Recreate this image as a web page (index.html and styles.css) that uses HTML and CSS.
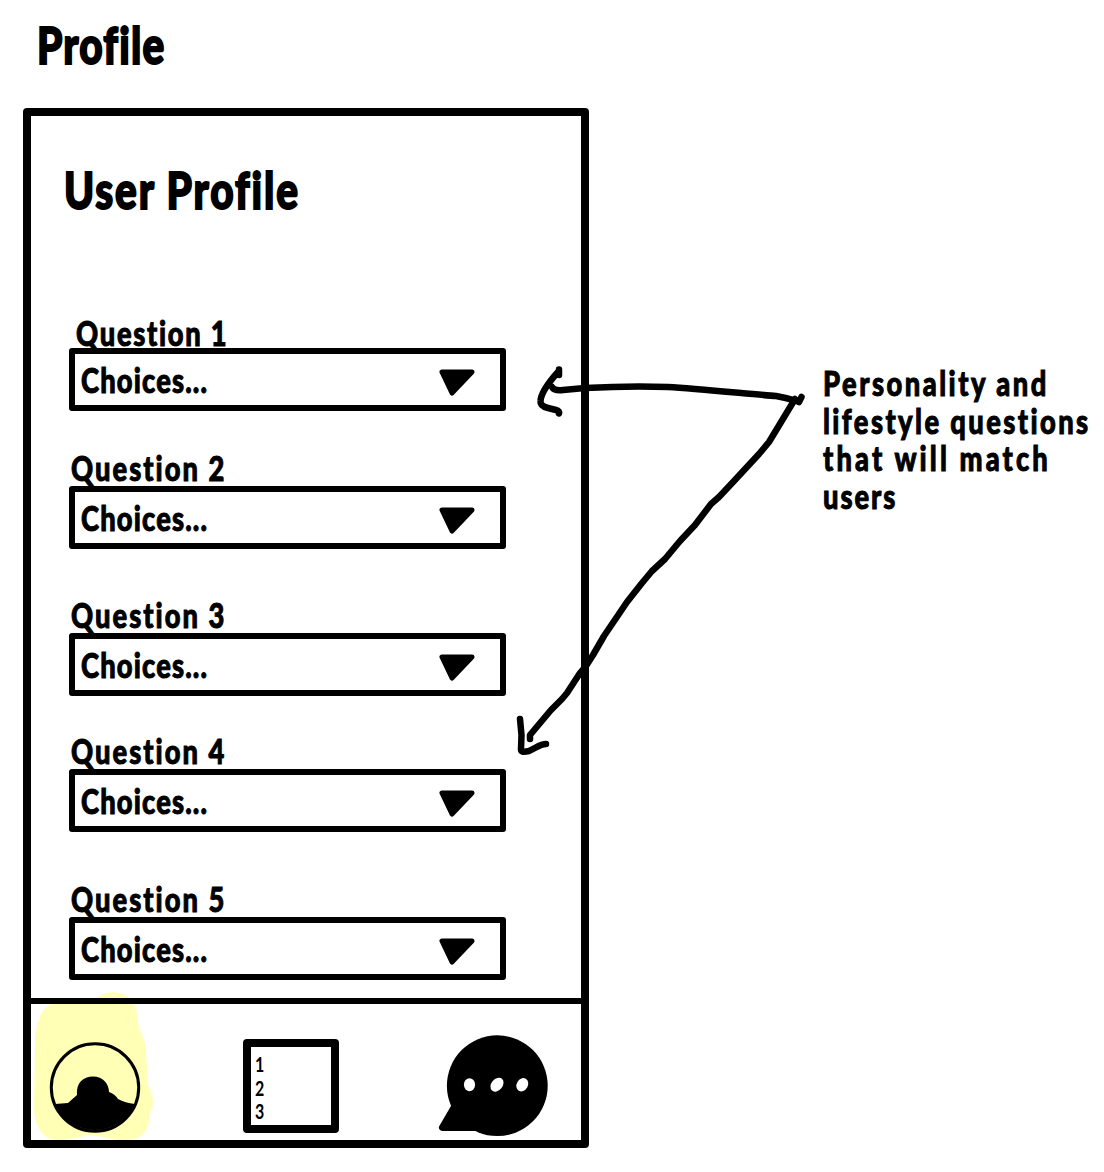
FILE: index.html
```html
<!DOCTYPE html>
<html lang="en">
<head>
<meta charset="utf-8">
<title>Profile</title>
<link rel="stylesheet" href="styles.css">
</head>
<body>
<main class="board">
  <h1 class="title"><span class="ink">Profile</span></h1>
  <div class="row">
    <section class="phone">
      <div class="screen">
        <h2 class="heading"><span class="ink">User Profile</span></h2>
        <form class="questions">
          <div class="field first"><label class="label"><span class="ink">Question 1</span></label><div class="select"><span class="ink">Choices...</span><svg class="caret" viewBox="0 0 36 27"><path d="M3 3H33L13 24Z"/></svg></div></div>
          <div class="field"><label class="label"><span class="ink">Question 2</span></label><div class="select"><span class="ink">Choices...</span><svg class="caret" viewBox="0 0 36 27"><path d="M3 3H33L13 24Z"/></svg></div></div>
          <div class="field"><label class="label"><span class="ink">Question 3</span></label><div class="select"><span class="ink">Choices...</span><svg class="caret" viewBox="0 0 36 27"><path d="M3 3H33L13 24Z"/></svg></div></div>
          <div class="field"><label class="label"><span class="ink">Question 4</span></label><div class="select"><span class="ink">Choices...</span><svg class="caret" viewBox="0 0 36 27"><path d="M3 3H33L13 24Z"/></svg></div></div>
          <div class="field"><label class="label"><span class="ink">Question 5</span></label><div class="select"><span class="ink">Choices...</span><svg class="caret" viewBox="0 0 36 27"><path d="M3 3H33L13 24Z"/></svg></div></div>
        </form>
      </div>
      <nav class="tabs">
        <div class="tab active">
          <svg class="marker" viewBox="33 990 122 152"><path d="M98 997C106 990 124 991 130 999C138 1006 137 1017 139 1029C147 1041 146 1055 147 1068L148 1085C154 1096 155 1106 149 1115C150 1130 143 1138 130 1140C116 1142 104 1136 88 1135C75 1139 58 1142 48 1138C39 1134 34 1120 34 1108L35 1040C36 1025 40 1011 48 1006C60 998 82 1003 98 997Z"/></svg>
          <svg class="avatar" viewBox="49 1041 92 93"><circle cx="95" cy="1087.500" r="43.700"/><path d="M55 1104L68 1103L77 1095C76 1083 83 1076.500 93 1076.500C103 1076.500 109 1084 109 1092Q115 1094 118 1099Q125 1103 135 1104A43.700 43.700 0 0 1 55 1104Z"/></svg>
        </div>
        <ol class="list"><li>1</li><li>2</li><li>3</li></ol>
        <svg class="chat" viewBox="438 1035 111 102"><circle cx="497.300" cy="1085.700" r="50.400"/><path class="tail" d="M455 1106L442.500 1127.500H480Z"/><g class="dots"><ellipse cx="469.500" cy="1084.700" rx="5.600" ry="6.500"/><ellipse cx="497" cy="1084.700" rx="5.600" ry="7.700" transform="rotate(40 497 1084.700)"/><ellipse cx="522.300" cy="1084.700" rx="5.600" ry="7" transform="rotate(30 522.300 1084.700)"/></g></svg>
      </nav>
    </section>
    <p class="note"><span class="ink l1">Personality and</span><span class="ink l2">lifestyle questions</span><span class="ink l3">that will match</span><span class="ink l4">users</span></p>
  </div>
  <svg class="arrows" viewBox="0 0 1104 1172">
    <path d="M559 369.500V375L558 372Q541 391 540.500 401Q540 406 548 408L556 410Q560 411 559 413.500"/>
    <path d="M552 387Q554 391 563 390L585 388C613 386.500 640 386 668 387C700 389 760 395 776 396Q787 398 797 401L799 402L801.500 397"/>
    <path d="M795 399L769 442L759 454L734 481L719 497L711 504L695 525L680 541L665 559L652 571L642 583L627 602L604 636L593 655L586 666L580 673L567 693L562 699L551 710L530 735V739"/>
    <path d="M520 719L521.500 735L521 749Q520 753 529 751C536 748 540 744 546 744"/>
  </svg>
</main>
</body>
</html>
```

FILE: styles.css
```css
* { box-sizing: border-box; }
body { margin: 0; background: #fff; color: #000; font-family: Lato, "Liberation Sans", sans-serif; font-weight: 900; }
.board { position: relative; width: 1104px; height: 1172px; overflow: hidden; }
.ink { display: inline-block; transform: scaleX(.78); transform-origin: 0 50%; white-space: nowrap; letter-spacing: 1.5px; -webkit-text-stroke: 1px #000; paint-order: stroke fill; stroke-linejoin: round; }
.title, .heading { margin: 0; font-size: 52px; line-height: 64px; font-weight: 900; height: 64px; }
.title { padding-left: 37px; margin-top: 12px; }
.title .ink, .heading .ink { -webkit-text-stroke-width: 2px; }
.heading .ink { letter-spacing: 2.400px; }
.row { display: flex; align-items: flex-start; margin-top: 32px; }
.phone { width: 566px; height: 1040px; margin-left: 22.500px; border: 8px solid #000; border-radius: 4px; display: flex; flex-direction: column; flex: none; }
.screen { height: 881.500px; padding: 41px 0 0 38px; }
.heading { margin-left: -5px; }
.questions { margin-top: 91.500px; display: grid; grid-template-rows: 135px 147px 136px 148px 101px; font-size: 35px; }
.label { display: block; height: 38.500px; line-height: 38px; padding-left: 2px; }
.label .ink { letter-spacing: 2.600px; }
.first .label { height: 35.500px; padding-left: 7px; }
.first .label .ink { letter-spacing: 2.200px; }
.select { width: 437.500px; height: 62.500px; border: 6.500px solid #000; border-radius: 3px; display: flex; justify-content: space-between; align-items: center; padding: 0 25px 0 6.500px; }
.caret { width: 36px; height: 27px; margin-top: 7px; stroke: #000; stroke-width: 5px; stroke-linejoin: round; flex: none; }
.tabs { flex: 1; border-top: 6px solid #000; display: flex; align-items: flex-start; }
.tab { position: relative; width: 92px; height: 93px; margin: 37.500px 0 0 18.500px; }
.marker { position: absolute; left: -16px; top: -51px; width: 122px; height: 152px; fill: #ffffb5; z-index: -1; }
.avatar { display: block; width: 92px; height: 93px; }
.avatar circle { fill: none; stroke: #000; stroke-width: 3px; }
.list { width: 96px; height: 94px; margin: 35px 0 0 102px; padding: 6.500px 0 0 4px; border: 8px solid #000; border-radius: 4px; list-style: none; font: 700 20px/23.500px Lato, sans-serif; }
.list li { transform: scaleX(.8); transform-origin: 0 50%; }
.chat { width: 111px; height: 102px; margin: 31px 0 0 99px; }
.tail { stroke: #000; stroke-width: 7px; stroke-linejoin: round; }
.dots { fill: #fff; }
.note { margin: 256px 0 0 234px; display: flex; flex-direction: column; align-items: flex-start; font-size: 35px; line-height: 37.700px; }
.l1 { letter-spacing: 3.200px; }
.l2 { letter-spacing: 3.100px; }
.l3 { letter-spacing: 4px; }
.l4 { letter-spacing: 2.500px; }
.arrows { position: absolute; inset: 0; width: 1104px; height: 1172px; pointer-events: none; fill: none; stroke: #000; stroke-width: 6.500px; stroke-linecap: round; stroke-linejoin: round; }
```
